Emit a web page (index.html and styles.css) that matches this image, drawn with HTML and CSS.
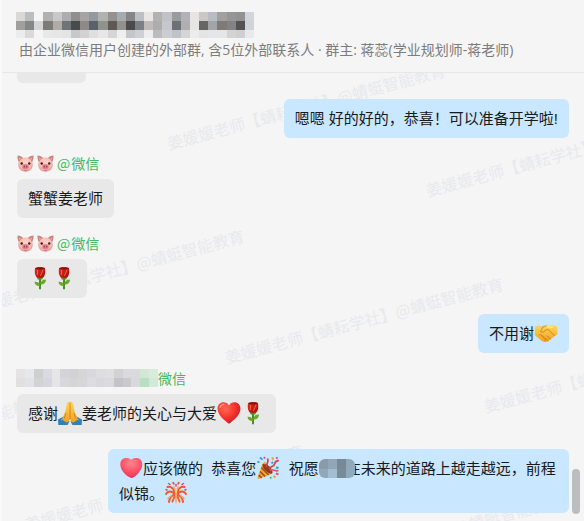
FILE: index.html
```html
<!DOCTYPE html>
<html lang="zh-CN">
<head>
<meta charset="utf-8">
<meta name="viewport" content="width=device-width, initial-scale=1">
<title>群聊</title>
<link rel="stylesheet" href="styles.css">
</head>
<body>
<svg class="defs" width="0" height="0" aria-hidden="true">
  <defs>
    <radialGradient id="g-red" cx="35%" cy="30%" r="75%"><stop offset="0" stop-color="#ff6a55"/><stop offset=".5" stop-color="#f93a31"/><stop offset="1" stop-color="#cf1720"/></radialGradient>
    <radialGradient id="g-pink" cx="50%" cy="25%" r="75%"><stop offset="0" stop-color="#ff8790"/><stop offset=".6" stop-color="#fb5168"/><stop offset="1" stop-color="#ee3159"/></radialGradient>
    <linearGradient id="g-gold" x1="0" y1="0" x2="0" y2="1"><stop offset="0" stop-color="#ffd65c"/><stop offset="1" stop-color="#f2a01c"/></linearGradient>
    <linearGradient id="g-rose" x1="0" y1="0" x2="1" y2="1"><stop offset="0" stop-color="#e52d20"/><stop offset="1" stop-color="#a80d0d"/></linearGradient>
    <radialGradient id="g-pig" cx="50%" cy="42%" r="62%"><stop offset="0" stop-color="#ffd3ca"/><stop offset=".6" stop-color="#f9bdb2"/><stop offset="1" stop-color="#df958c"/></radialGradient>
  </defs>
  <symbol id="pig" viewBox="0 0 24 24">
    <path d="M12 3.500c2 0 3.500.2 5 .7l5-2.400c.7 3 .4 5.500-.5 8 .8 2 1.100 4 .6 6.200C21.200 21 17.500 23.500 12 23.500S2.800 21 1.900 16c-.5-2.200-.2-4.200.6-6.200-.9-2.500-1.200-5-.5-8l5 2.400c1.500-.5 3-.7 5-.7Z" fill="url(#g-pig)"/>
    <path d="M.8.800C4 1 7 2.300 8.300 4.200 5.800 5.300 4 7.300 2.800 9.800 1 7 .4 4 .8.800ZM23.200.8C20 1 17 2.300 15.700 4.200c2.500 1.100 4.300 3.100 5.500 5.600C23 7 23.600 4 23.200.8Z" fill="#c4847b"/>
    <path d="M2.300 3 6 4.500 3.500 7.400ZM21.700 3 18 4.500l2.500 2.900Z" fill="#eba59b"/>
    <circle cx="6.700" cy="12" r="1.700" fill="#35231f"/><circle cx="17.300" cy="12" r="1.700" fill="#35231f"/>
    <ellipse cx="12" cy="16.600" rx="4.600" ry="3.800" fill="#e27f92"/>
    <ellipse cx="10.300" cy="16.500" rx="1" ry="1.600" fill="#a04560"/><ellipse cx="13.700" cy="16.500" rx="1" ry="1.600" fill="#a04560"/>
    <path d="M9.500 21.700q2.500 1 5 0" fill="none" stroke="#b86b6b"/>
  </symbol>
  <symbol id="rose" viewBox="0 0 24 24">
    <path d="M12 11.500v11" stroke="#4d8d20" stroke-width="2" stroke-linecap="round"/>
    <path d="M12 20C8.800 20.500 6.600 18.500 6.500 15.800c3.300-.3 5.200 1.200 5.500 4.200ZM12.300 18.600c.2-3.600 2.200-5.300 5.700-5.200-.1 3.300-2.200 5.300-5.700 5.200Z" fill="#6aa92a"/>
    <path d="M8 9.700q4 3.600 8 0l-1.800 3.700h-4.400Z" fill="#538d22"/>
    <path d="M7 2.300c1.500-.9 2.900-1.100 5-1.100s3.600.3 5 1.100c.5 3.300.4 6.500-1.300 8.600-1.900 1.300-5.400 1.300-7.300 0C6.600 8.800 6.500 5.600 7 2.300Z" fill="url(#g-rose)"/>
    <path d="M7 2.300c1.700 1.700 8.300 1.700 10 0-2-1.300-8-1.300-10 0Z" fill="#87100e"/>
    <path d="M9.700 3.900 9.200 9M15 3.700 12.500 9.800" stroke="#ff6b51" stroke-width=".9" fill="none"/>
  </symbol>
  <symbol id="heart" viewBox="0 0 24 24">
    <path d="M12 22.800C7.500 19.100.6 14.300.6 7.700.6 4 3.200 1.300 6.500 1.300c2.400 0 4.300 1.200 5.500 3.200 1.200-2 3.100-3.200 5.500-3.200 3.300 0 5.900 2.700 5.900 6.400 0 6.600-6.900 11.400-11.400 15.100Z" fill="url(#g-red)"/>
    <path d="M3 6.500C3.500 4.500 5 3.400 6.900 3.400" fill="none" stroke="#ff9d8c" stroke-width="1.200" stroke-linecap="round"/>
  </symbol>
  <symbol id="softheart" viewBox="0 0 24 24">
    <path d="M12.500 22C9.500 22 1.300 15.500 1.300 8.600 1.300 4.500 3.800 2 7.200 2c2.100 0 3.900.6 5.100 2 1.200-1.400 2.900-2 5-2 3.500 0 6 2.500 6 6.300C23.300 15 15.500 22 12.500 22Z" fill="url(#g-pink)"/>
  </symbol>
  <symbol id="pray" viewBox="0 0 24 24">
    <path d="M0 18.500 6.500 15l5 5.500L9.500 24H.3ZM24 18.500 17.500 15l-5 5.500 2 3.500h9.200Z" fill="#3180b8"/>
    <path d="M3 19.200 7 16.500l3.500 4.300M21 19.200l-4-2.700-3.500 4.300" fill="none" stroke="#58a7d6" stroke-width="1.300"/>
    <path d="M11.900 1.200c-1.200-1-2.700-.4-3 1.300L7.600 9.700 4.200 18c1.500 2 3.600 3.500 5.400 3.500l2.400-3.300 2.400 3.300c1.800 0 3.900-1.500 5.400-3.500l-3.400-8.300-1.300-7.200c-.3-1.700-1.900-2.300-3.200-1.300Z" fill="url(#g-gold)"/>
    <path d="M12 1.600V18M7.900 12.200l-1.500 5.200M16.100 12.200l1.500 5.200" fill="none" stroke="#c77b12" stroke-width=".8"/>
  </symbol>
  <symbol id="shake" viewBox="0 0 24 24">
    <path d="M.8 5.500 5 4.200l4 1.500 3-1.200 7-.3 4.300 1.200v8l-2.600 1.700-6.200 5c-2 1.200-4.500 1.300-6.500-.1l-5-4L.8 14Z" fill="url(#g-gold)"/>
    <path d="M8.800 6 6.600 10.500c1.900 1.400 4 .5 5-1.500l2.500-.5 6.500 6.200M5 14.300c1.600-1.600 3.200-.5 2.500 1 1.800-.8 3 .4 2.100 1.700 1.700-.3 2.400 1 1.300 2.500M14 19.500l-2.500-2M16.600 18l-3.500-3M9 5.900l3-1.200" fill="none" stroke="#c67a10" stroke-width=".8" stroke-linecap="round"/>
    <path d="M13 6.200q3-.8 6 .2" stroke="#fff0a0" stroke-width="1.200" fill="none"/>
  </symbol>
  <symbol id="party" viewBox="0 0 24 24">
    <path d="M6.500 7.500C10 9 14.500 13 16.500 17.500L3 22.800c-1 .3-1.700-.4-1.400-1.300Z" fill="#f0a327"/>
    <path d="M5.400 11.500 12.700 19M4 15.500l5.200 5M2.700 19.200l3 2.700" stroke="#a94b1c" stroke-width="1.600"/>
    <ellipse cx="11.500" cy="12.600" rx="2.800" ry="6.600" transform="rotate(-45 11.500 12.600)" fill="#8e3b20"/>
    <path d="M10.500 11.500C9.500 8 13.500 6.500 11.500 2.500M13 13c2-3 4.500-2 5.500-5s2.500-3.500 4.300-3.300" fill="none" stroke="#dc4040" stroke-width="1.700"/>
    <path d="M14 14.500c3.500-2.400 5 1.500 8.500 0" fill="none" stroke="#e35a65" stroke-width="1.700"/>
    <path d="m4 1.500 2.400 2.200M1.500 5.500l2 1M15.500 7.500l1.500-1.600M20 11.500l2.500.5" stroke="#359ccb" stroke-width="1.800"/>
    <path d="m16 1.500 1.500 2.200M17.500 20l2 1.500M8.500 6l.5 2.200" stroke="#e7a621" stroke-width="2"/>
    <path d="m20 2.500 1.700-1M20 17.500l2.500.8M8 1l1 1.500" stroke="#df4f80" stroke-width="1.900"/>
    <path d="M14.500 21l.5 1.500M17.500 10l1-1" stroke="#62a94a" stroke-width="1.800"/>
  </symbol>
  <symbol id="firework" viewBox="0 0 24 24">
    <g fill="none" stroke-linecap="round">
      <path d="M11 12C9.500 7 6.500 5 3.500 6M10.500 12.500C7 9.500 4 10 2 13M13 12c1.500-5 4.500-7 7.500-6M13.500 12.500c3.500-3 6.500-2.500 8.500.5" stroke="#f05432" stroke-width="2"/>
      <path d="M10.500 13.500c-3 1-5 4-5.500 7.500M13.500 13.500c3 1 5 4 5.500 7.500M8.500 20.500l2-5M15.500 20.500l-2-5" stroke="#f0602f" stroke-width="2"/>
      <path d="M11.500 10.500 10 6M12.500 10.500 14 6M12 14v7M7.500 14.500 4 17.500M16.500 14.500l3.500 3" stroke="#f9a05a" stroke-width="1.500"/>
      <path d="M9 1.500 10 3M15 1.500 14 3M4.500 2.500 6 3.500M19.500 2.500 18 3.500M12 3.500V5M2 8.500l1 .5M22 8.500l-1 .5" stroke="#e64a3a" stroke-width="1.500"/>
      <path d="M7 8.500h.5M17 8.500h-.5M12 9v3M12 23v.200" stroke="#ffd27f" stroke-width="1.700"/>
    </g>
  </symbol>
</svg>

<main class="window">
  <header class="header">
    <svg class="mosaic" data-mosaic="title" width="238" height="26" aria-hidden="true"></svg>
    <p class="subtitle">由企业微信用户创建的外部群, 含5位外部联系人 · 群主: 蒋蕊(学业规划师-蒋老师)</p>
  </header>

  <section class="chat">
    <div class="watermarks" aria-hidden="true">
      <span class="mark m1">姜媛媛老师【蜻耘学社】@蜻蜓智能教育</span>
      <span class="mark m2">姜媛媛老师【蜻耘学社】@蜻蜓智能教育</span>
      <span class="mark m3">姜媛媛老师【蜻耘学社】@蜻蜓智能教育</span>
      <span class="mark m4">姜媛媛老师【蜻耘学社】@蜻蜓智能教育</span>
      <span class="mark m5">姜媛媛老师【蜻耘学社】@蜻蜓智能教育</span>
      <span class="mark m6">姜媛媛老师【蜻耘学社】@蜻蜓智能教育</span>
      <span class="mark m7">姜媛媛老师【蜻耘学社】@蜻蜓智能教育</span>
      <span class="mark m8">姜媛媛老师【蜻耘学社】@蜻蜓智能教育</span>
    </div>

    <div class="messages">
      <div class="stub"></div>
      <article class="message mine"><p class="bubble">嗯嗯 好的好的，恭喜！可以准备开学啦!</p></article>
      <article class="message">
        <div class="sender"><svg class="pig"><use href="#pig"/></svg><svg class="pig"><use href="#pig"/></svg><span>@</span><span>微信</span></div>
        <p class="bubble">蟹蟹姜老师</p>
      </article>
      <article class="message">
        <div class="sender"><svg class="pig"><use href="#pig"/></svg><svg class="pig"><use href="#pig"/></svg><span>@</span><span>微信</span></div>
        <p class="bubble"><svg class="emoji"><use href="#rose"/></svg><svg class="emoji"><use href="#rose"/></svg></p>
      </article>
      <article class="message mine"><p class="bubble">不用谢<svg class="emoji"><use href="#shake"/></svg></p></article>
      <article class="message">
        <div class="sender masked"><svg class="mosaic" data-mosaic="name" width="142" height="18" aria-hidden="true"></svg><span>微信</span></div>
        <p class="bubble">感谢<svg class="emoji"><use href="#pray"/></svg>姜老师的关心与大爱<svg class="emoji"><use href="#heart"/></svg><svg class="emoji"><use href="#rose"/></svg></p>
      </article>
      <article class="message mine"><p class="bubble"><svg class="emoji"><use href="#softheart"/></svg>应该做的  恭喜您<svg class="emoji"><use href="#party"/></svg>  祝愿<span class="hidden-name"><svg class="mosaic" data-mosaic="inline" width="36" height="19" aria-hidden="true"></svg></span>在未来的道路上越走越远，前程似锦。<svg class="emoji"><use href="#firework"/></svg></p></article>
    </div>
    <div class="thumb"></div>
  </section>
</main>
<script src="mosaic.js"></script>
</body>
</html>
```
FILE: styles.css
```css
* {
  box-sizing: border-box;
}

body {
  margin: 0;
  background: #f5f5f5;
  color: #181a1c;
  font-family: "Liberation Sans", "Noto Sans CJK SC", sans-serif;
  font-size: 15px;
}

p {
  margin: 0;
}

.defs {
  position: absolute;
}

.window {
  display: flex;
  flex-direction: column;
  min-height: 100vh;
  border-left: 2px solid #f8f9fd;
}

.header {
  display: flex;
  flex-direction: column;
  padding: 12px 14px 11px;
  border-bottom: 1px solid #e7e7e7;
}

.mosaic {
  display: block;
}

.subtitle {
  padding-left: 3px;
  color: #7c7c7c;
  font-family: "Open Sans", "Noto Sans CJK SC", sans-serif;
  font-size: 14px;
  line-height: 23px;
}

.chat {
  position: relative;
  flex: 1;
  overflow: hidden;
}

.messages {
  position: relative;
  display: flex;
  flex-direction: column;
  gap: 16px;
  padding: 0 15px 8px;
}

.stub {
  width: 69px;
  height: 10px;
  border-radius: 0 0 6px 6px;
  background: #e8e8e8;
}

.message {
  display: flex;
  flex-direction: column;
  align-items: flex-start;
}

.mine {
  align-items: flex-end;
  padding-left: 91px;
}

.sender {
  display: flex;
  align-items: center;
  gap: 3px;
  height: 18px;
  margin-bottom: 7px;
  color: #48b560;
  font-family: "Noto Sans CJK SC", sans-serif;
  font-size: 14px;
  line-height: 18px;
}

.sender span + span {
  margin-left: -2px;
}

.masked {
  gap: 0;
  margin-left: -1px;
}

.pig {
  width: 17px;
  height: 17px;
}

.bubble {
  padding: 7px 11px;
  border-radius: 6px;
  background: #e8e8e8;
  line-height: 25px;
  white-space: pre-wrap;
}

.mine .bubble {
  background: #c9e7ff;
}

.emoji {
  width: 24px;
  height: 24px;
  margin: -4px 0 0;
  vertical-align: middle;
}

.hidden-name {
  position: relative;
  display: inline-block;
  width: 27px;
  height: 19px;
  margin-top: -4px;
  vertical-align: middle;
}

.hidden-name .mosaic {
  position: absolute;
  top: 0;
  left: 0;
  border-radius: 6px;
}

.watermarks {
  position: absolute;
  inset: 0;
  overflow: hidden;
}

.mark {
  position: absolute;
  color: #e8e9ec;
  font-family: "Noto Sans CJK SC", sans-serif;
  font-size: 16px;
  line-height: 20px;
  white-space: nowrap;
  transform: rotate(-15deg);
  transform-origin: 8px 10px;
}

.m1 { left: 165px; top: 58px; }
.m2 { left: 424px; top: 105px; }
.m3 { left: -36px; top: 224px; }
.m4 { left: 223px; top: 272px; }
.m5 { left: 482px; top: 321px; }
.m6 { left: -236px; top: 390px; }
.m7 { left: 23px; top: 439px; }
.m8 { left: 282px; top: 488px; }

.thumb {
  position: absolute;
  right: 4px;
  bottom: 7px;
  width: 8px;
  height: 45px;
  border-radius: 4px;
  background: #bcbdc1;
}
```
FILE: mosaic.js
```js
// Colour rows for the pixelated names; "-" leaves a cell empty.
const mosaics = {
  title: {
    cols: 26,
    heights: [9, 9, 8],
    rows: [
      'd9d8d5 bbbdc0 - b2b1b2 c8c8c9 adadaf 8f8f90 a5a5a5 9299a1 b1b1af 949290 a6abb0 868686 bbc0c6 e9e6e4 b2b2b3 c1c2c8 9b9b9c b0b2b5 e8e4e1 c8c8c9 b8bcc4 a29f9e 969696 929292 d2d6dc',
      'a09f9d 858688 d5d5d8 7e7a76 afaba8 6f7478 4a4a4b 8d8b88 59616a 8f928d 5d5955 92918f 4b4b4a 7c7f83 c0bbb8 adacae c5c7cc 6c7077 b0afb0 e5e5e4 666666 a3a4a8 7f7a76 838284 535353 d0d4d9',
      'ececec d9dadc - e8e8e8 e6e6e6 e4e4e6 c8c8c9 d2d2d2 dfdfe2 e7e7e7 d5d5d5 efefef c6c6c8 cfd0d3 ededed bcbcbe ccccd1 bfc2c8 d5d5d6 ececec e4e4e4 e5e6e9 e6e6e6 d3d3d4 cfcfcf e8e9eb'
    ]
  },
  name: {
    cols: 16,
    heights: [9, 9],
    rows: [
      'e5e3e4 e7e8ec cecfd0 dadbe0 e6e6ea d4d4d5 d2d2d4 d6d6d7 d9d9dc dddde0 e0dfe0 d2d2d4 dadade d9dadc d2e7d6 d8ecdc',
      'e2dfdf e2e3e6 d3d3d5 d5d6de e5e5e8 d8d8dc d5d5d6 d7d7da dcdce0 d9d9dc dadade c4c4c7 cacacd d8d8dd b9dec3 d0ead6'
    ]
  },
  inline: {
    cols: 4,
    heights: [10, 9],
    rows: [
      '8a9aa8 91a6b7 768997 90a8b8',
      '93a8b7 a4bdd0 778b9b 8fa9bd'
    ]
  }
};

for (const svg of document.querySelectorAll('[data-mosaic]')) {
  const { cols, heights, rows } = mosaics[svg.dataset.mosaic];
  const total = svg.getAttribute('width');
  let y = 0;
  rows.forEach((row, r) => {
    row.split(' ').forEach((color, c) => {
      if (color === '-') return;
      const x = Math.round(c * total / cols);
      const rect = document.createElementNS('http://www.w3.org/2000/svg', 'rect');
      rect.setAttribute('x', x);
      rect.setAttribute('y', y);
      rect.setAttribute('width', Math.round((c + 1) * total / cols) - x);
      rect.setAttribute('height', heights[r]);
      rect.setAttribute('fill', '#' + color);
      svg.append(rect);
    });
    y += heights[r];
  });
}
```
